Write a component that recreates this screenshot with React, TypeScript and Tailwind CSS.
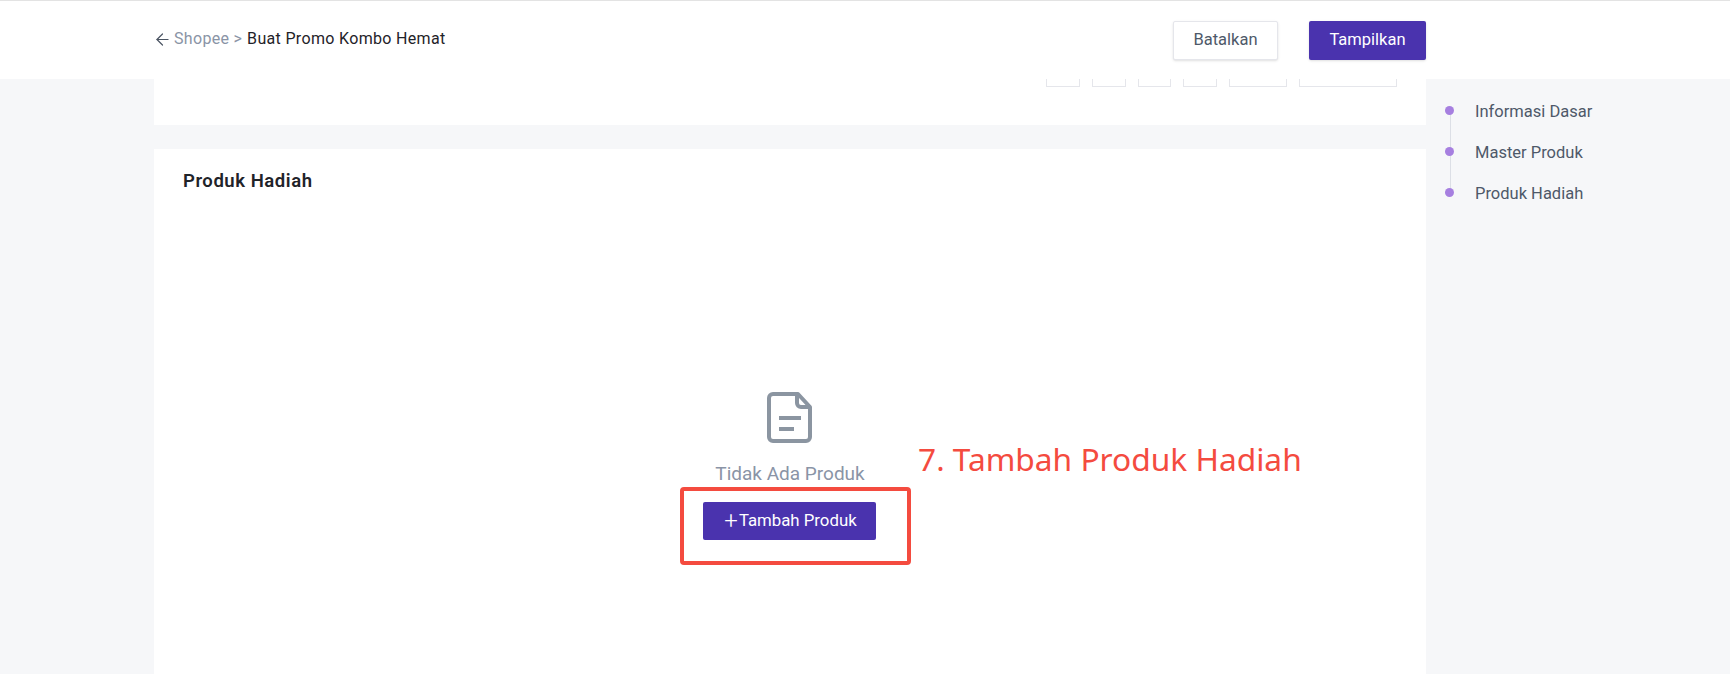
import { ArrowLeft } from 'lucide-react';

const tabs = ['w-[34px]', 'w-[34px]', 'w-[33px]', 'w-[34px]', 'w-[58px]', 'w-[98px]'];
const anchors = ['Informasi Dasar', 'Master Produk', 'Produk Hadiah'];

export default function App() {
  return (
    <div className="h-[674px] w-[1730px] overflow-hidden bg-[#f6f7f9] font-['Roboto',sans-serif] text-[#1f2329]">
      {/* top bar */}
      <header className="flex h-[79px] items-start border-t border-[#e3e3e3] bg-white pl-[154px]">
        <div className="flex w-[1272px] items-start justify-between">
          <div className="mt-[28px] flex items-center text-[16px] leading-[20px] tracking-[0.33px]">
            <ArrowLeft size={19} strokeWidth={1.5} className="-ml-[1px] mr-[2px] text-[#4b5563]" />
            <span className="text-[#8a94a6]">Shopee</span>
            <span className="ml-[4px] text-[#8a94a6]">&gt;</span>
            <span className="ml-[5px] text-[#1f2329]">Buat Promo Kombo Hemat</span>
          </div>
          <div className="mt-[20px] flex">
            <button className="h-[39px] w-[105px] rounded-[2px] border border-[#e5e6eb] bg-white text-[16.5px] text-[#4e5969] shadow-sm">
              Batalkan
            </button>
            <button className="ml-[31px] h-[39px] w-[117px] rounded-[2px] bg-[#4a33ae] text-[16.5px] text-white shadow-sm">
              Tampilkan
            </button>
          </div>
        </div>
      </header>

      <main className="flex pl-[154px]">
        <div className="w-[1272px]">
          {/* bottom of the card scrolled under the header */}
          <div className="flex h-[46px] items-start justify-end gap-3 bg-white pr-[29px]">
            {tabs.map((w, i) => (
              <div key={i} className={`${w} h-2 border-x border-b border-[#e5e6eb]`} />
            ))}
          </div>

          <section className="relative mt-6 h-[530px] bg-white pl-[29px] pt-[20px]">
            <h2 className="text-[18.5px] font-semibold leading-[24px] tracking-[0.55px] text-[#1f2329]">Produk Hadiah</h2>
            <div className="mt-[199px] flex w-[1216px] flex-col items-center">
              <svg width="45" height="51" viewBox="0 0 45 51" fill="none" className="mr-[3px]">
                <path
                  d="M6 2h25l12 13v30a4 4 0 0 1-4 4H6a4 4 0 0 1-4-4V6a4 4 0 0 1 4-4Z"
                  stroke="#8b95a1"
                  strokeWidth="4"
                  strokeLinejoin="round"
                />
                <path d="M30 2v9a4 4 0 0 0 4 4h9" stroke="#8b95a1" strokeWidth="4" strokeLinejoin="round" />
                <path d="M12 26h22" stroke="#8b95a1" strokeWidth="4" />
                <path d="M12 37h15" stroke="#8b95a1" strokeWidth="4" />
              </svg>
              <p className="mt-[19px] mr-[2px] text-[19px] leading-[24px] text-[#8a94a6]">Tidak Ada Produk</p>
              <button className="mt-[16px] mr-[4px] flex h-[38px] w-[173px] items-center justify-center rounded-[2px] bg-[#4a33ae] pl-[3px] text-[16.8px] text-white">
                <span className="mr-[1px] text-[24px] font-light leading-none">+</span>Tambah Produk
              </button>
            </div>

            {/* annotation drawn over the screenshot */}
            <div className="absolute left-[526px] top-[338px] h-[78px] w-[231px] rounded-[4px] border-[4px] border-[#f44b3f]" />
            <p className="absolute left-[764px] top-[288px] font-['Noto_Sans',sans-serif] text-[31.7px] leading-[44px] whitespace-nowrap text-[#f44b3f]">
              7. Tambah Produk Hadiah
            </p>
          </section>
        </div>

        {/* anchor list */}
        <nav className="relative ml-[19px] pt-[21px]">
          <div className="absolute left-[5px] top-[31px] h-[82px] w-px bg-[#dcdfe6]" />
          {anchors.map((label) => (
            <div key={label} className="relative mb-[17px] flex h-[24px] items-center text-[16.5px] text-[#4e5969] last:mb-0">
              <span className="-mt-[3px] h-[9px] w-[9px] rounded-full bg-[#a67fe0]" />
              <span className="ml-[21px]">{label}</span>
            </div>
          ))}
        </nav>
      </main>
    </div>
  );
}
